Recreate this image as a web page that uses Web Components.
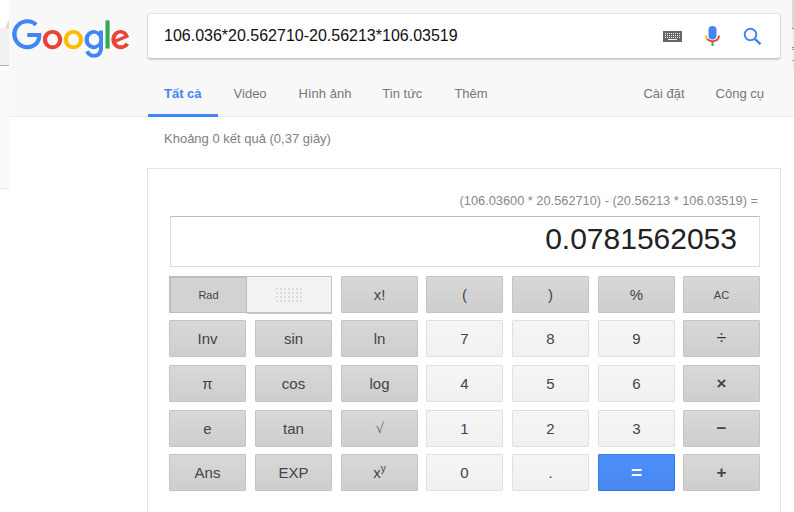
<!DOCTYPE html>
<html lang="vi">
<head>
<meta charset="utf-8">
<title>106.036*20.562710-20.56213*106.03519</title>
<style>
  html, body { margin: 0; height: 512px; overflow: hidden; background: #fff; }
  body { font-family: "Liberation Sans", Arial, sans-serif; display: flex; }
  search-page { flex: 1; }
</style>
</head>
<body>
<template id="calc-key-tpl">
  <style>
    :host {
      display: flex;
      align-items: center;
      justify-content: center;
      box-sizing: border-box;
      width: 77px;
      height: 37px;
      font-size: 15px;
      color: #444;
      border: 1px solid #c4c4c4;
      border-radius: 1px;
      background: linear-gradient(#d8d8d8, #cecece);
    }
    :host([kind="num"]) {
      border-color: #e0e0e0;
      background: linear-gradient(#f5f5f5, #f1f1f1);
    }
    :host([kind="eq"]) {
      border-color: #3079ed;
      background: linear-gradient(#4d90fe, #4787ed);
      color: #fff;
      font-weight: bold;
      font-size: 19px;
    }
    :host([small]) { font-size: 11px; }
    :host([op]) { font-size: 18px; color: #333; }
    :host([op="bold"]) { font-weight: bold; font-size: 17px; color: #444; }
  </style>
  <span><slot></slot></span>
</template>

<script>
class SearchPage extends HTMLElement {
	get template() {
		let t = document.createElement("template");
		t.innerHTML = `
    <style>
      :host {
        display: grid;
        grid-template-columns: 9px 1fr;
        height: 512px;
      }
      .side {
        display: flex;
        flex-direction: column;
      }
      .side-top {
        box-sizing: border-box;
        height: 28px;
        background: #fff;
        display: flex;
        justify-content: flex-end;
        align-items: flex-end;
      }
      .side-top i {
        width: 0;
        height: 0;
        border-left: 4px solid transparent;
        border-bottom: 8px solid #d8d8d8;
      }
      .side-bar { height: 37px; background: #f0f0f0; border-bottom: 1px solid #b4b4b4; }
      .side-mid { height: 122px; background: #fafafa; border-bottom: 1px solid #e6e6e6; }
      .main { min-width: 0; }
    </style>
    <div class="side">
      <div class="side-top"><i></i></div>
      <div class="side-bar"></div>
      <div class="side-mid"></div>
    </div>
    <div class="main">
      <slot></slot>
    </div>
		`;
		return t;
	}
	connectedCallback() {
		this.attachShadow({ mode: "open" });
		this.shadowRoot.appendChild(this.template.content.cloneNode(true));
	}
}
customElements.define("search-page", SearchPage);

class SearchHeader extends HTMLElement {
	get template() {
		let t = document.createElement("template");
		t.innerHTML = `
    <style>
      :host {
        display: block;
        position: relative;
        box-sizing: border-box;
        height: 117px;
        background: #f8f8f8;
        border-bottom: 1px solid #ebebeb;
        padding-top: 14px;
      }
      .top {
        display: flex;
        align-items: flex-start;
        padding-left: 3px;
      }
      .logo { width: 118px; height: 40px; margin-top: 5px; flex: none; }
      .box {
        box-sizing: border-box;
        width: 632px;
        height: 44px;
        margin-left: 18px;
        padding: 0 18px 0 16px;
        display: flex;
        align-items: center;
        background: #fff;
        border-radius: 2px;
        box-shadow: 0 2px 2px rgba(0,0,0,.16), 0 0 0 1px rgba(0,0,0,.08);
        font-size: 16px;
        color: #111;
      }
      .query { flex: 1; }
      .box svg { display: block; flex: none; }
      .kbd { margin-right: 23px; }
      .mic { margin-right: 23px; }
      .tabs {
        display: flex;
        height: 43px;
        margin-top: 15px;
        padding-left: 139px;
        padding-right: 14px;
      }
      ::slotted(search-tab[push]) { margin-left: auto; }
      /* scrollbar remains at the right edge of the capture */
      .edge {
        position: absolute;
        top: 0;
        right: 0;
        width: 2px;
        height: 70px;
        background:
          linear-gradient(#9a9a9a, #9a9a9a) 0 28px / 2px 1px no-repeat,
          linear-gradient(#8c8c8c, #8c8c8c) 0 47px / 2px 1px no-repeat,
          linear-gradient(#9a9a9a, #9a9a9a) 0 49px / 2px 1px no-repeat,
          linear-gradient(#a8a8a8, #a8a8a8) 0 60px / 2px 1px no-repeat,
          linear-gradient(#dcdcdc 28px, #f0f0f0 28px);
      }
    </style>
    <div class="top">
      <svg class="logo" viewBox="0 0 272 92" role="img" aria-label="Google">
        <path fill="#EA4335" d="M115.75 47.18c0 12.77-9.99 22.18-22.25 22.18s-22.25-9.41-22.25-22.18C71.25 34.32 81.24 25 93.5 25s22.25 9.32 22.25 22.18zm-9.74 0c0-7.98-5.79-13.44-12.51-13.44S80.99 39.2 80.99 47.18c0 7.9 5.79 13.44 12.51 13.44s12.51-5.55 12.51-13.44z"/>
        <path fill="#FBBC05" d="M163.75 47.18c0 12.77-9.99 22.18-22.25 22.18s-22.25-9.41-22.25-22.18c0-12.85 9.99-22.18 22.25-22.18s22.25 9.32 22.25 22.18zm-9.74 0c0-7.98-5.79-13.44-12.51-13.44s-12.51 5.46-12.51 13.44c0 7.9 5.79 13.44 12.51 13.44s12.51-5.55 12.51-13.44z"/>
        <path fill="#4285F4" d="M209.75 26.34v39.82c0 16.38-9.66 23.07-21.08 23.07-10.75 0-17.22-7.19-19.66-13.07l8.48-3.53c1.51 3.61 5.21 7.87 11.17 7.87 7.31 0 11.84-4.51 11.84-13v-3.19h-.34c-2.18 2.69-6.38 5.04-11.68 5.04-11.09 0-21.25-9.66-21.25-22.09 0-12.52 10.16-22.26 21.25-22.26 5.29 0 9.49 2.35 11.68 4.96h.34v-3.61h9.25zm-8.56 20.92c0-7.81-5.21-13.52-11.84-13.52-6.72 0-12.35 5.71-12.35 13.52 0 7.73 5.63 13.36 12.35 13.36 6.63 0 11.84-5.63 11.84-13.36z"/>
        <path fill="#34A853" d="M225 3v65h-9.5V3h9.5z"/>
        <path fill="#EA4335" d="M262.02 54.48l7.56 5.04c-2.44 3.61-8.32 9.83-18.48 9.83-12.6 0-22.01-9.74-22.01-22.18 0-13.19 9.49-22.18 20.92-22.18 11.51 0 17.14 9.16 18.98 14.11l1.01 2.52-29.65 12.28c2.27 4.45 5.8 6.72 10.75 6.72 4.96 0 8.4-2.44 10.92-6.14zm-23.27-7.98l19.82-8.23c-1.09-2.77-4.37-4.7-8.23-4.7-4.95 0-11.84 4.37-11.59 12.93z"/>
        <path fill="#4285F4" d="M35.29 41.41V32H67c.31 1.64.47 3.58.47 5.68 0 7.06-1.93 15.79-8.15 22.01-6.05 6.3-13.78 9.66-24.02 9.66C16.32 69.35.36 53.89.36 34.91.36 15.93 16.32.47 35.3.47c10.5 0 17.98 4.12 23.6 9.49l-6.64 6.64c-4.03-3.78-9.49-6.72-16.97-6.72-13.86 0-24.7 11.17-24.7 25.03 0 13.86 10.84 25.03 24.7 25.03 8.99 0 14.11-3.61 17.39-6.89 2.66-2.66 4.41-6.46 5.1-11.65l-22.49.01z"/>
      </svg>
      <div class="box">
        <span class="query"><slot name="query"></slot></span>
        <svg class="kbd" width="19" height="11" viewBox="0 0 19 11">
          <rect width="19" height="11" fill="#666"/>
          <path fill="none" stroke="#eee" stroke-width="1" stroke-dasharray="1 1" d="M2 2.5h15M2 4.5h15M2 6.5h15"/>
          <path stroke="#eee" d="M5 8.5h9"/>
        </svg>
        <svg class="mic" width="15" height="20" viewBox="0 0 15 20">
          <rect x="3.5" y="0" width="8" height="13.5" rx="4" fill="#4285f4"/>
          <path fill="none" stroke="#fbbc05" stroke-width="2" d="M1 9.5c0 1.5.4 2.7 1.2 3.6"/>
          <path fill="none" stroke="#ea4335" stroke-width="2" d="M2.2 13.1c1.2 1.4 3.1 2.1 5.3 2.1 3.9 0 6.5-2.3 6.5-5.7"/>
          <rect x="6.5" y="16" width="2" height="4" fill="#34a853"/>
        </svg>
        <svg width="19" height="18" viewBox="0 0 19 18">
          <circle cx="7.5" cy="7.5" r="5.8" fill="none" stroke="#4285f4" stroke-width="2"/>
          <path d="M11.8 11.8l5.7 5.4" fill="none" stroke="#4285f4" stroke-width="2.4"/>
        </svg>
      </div>
    </div>
    <div class="tabs"><slot name="tab"></slot></div>
    <div class="edge"></div>
		`;
		return t;
	}
	connectedCallback() {
		this.attachShadow({ mode: "open" });
		this.shadowRoot.appendChild(this.template.content.cloneNode(true));
	}
}
customElements.define("search-header", SearchHeader);

class SearchTab extends HTMLElement {
	get template() {
		let t = document.createElement("template");
		t.innerHTML = `
    <style>
      :host {
        display: flex;
        align-items: center;
        box-sizing: border-box;
        height: 43px;
        padding: 0 16px 5px;
        font-size: 13px;
        color: #777;
        white-space: nowrap;
      }
      :host([active]) {
        color: #4285f4;
        font-weight: bold;
        border-bottom: 3px solid #4285f4;
        padding-bottom: 2px;
      }
    </style>
    <slot></slot>
		`;
		return t;
	}
	connectedCallback() {
		this.attachShadow({ mode: "open" });
		this.shadowRoot.appendChild(this.template.content.cloneNode(true));
	}
}
customElements.define("search-tab", SearchTab);

class ResultStats extends HTMLElement {
	connectedCallback() {
		this.attachShadow({ mode: "open" });
		this.shadowRoot.innerHTML = `
    <style>
      :host {
        display: block;
        padding: 14px 0 0 155px;
        height: 37px;
        font-size: 13px;
        line-height: 15px;
        color: #808080;
      }
    </style>
    <slot></slot>
		`;
	}
}
customElements.define("result-stats", ResultStats);

class CalcCard extends HTMLElement {
	get template() {
		let t = document.createElement("template");
		t.innerHTML = `
    <style>
      :host {
        display: block;
        box-sizing: border-box;
        width: 634px;
        height: 360px;
        margin-left: 138px;
        padding: 0 20px 0 21px;
        background: #fff;
        border: 1px solid #e4e4e4;
        border-bottom: 0;
      }
      .expr {
        padding: 24px 2px 0 0;
        height: 23px;
        line-height: 15px;
        font-size: 12.8px;
        color: #888;
        text-align: right;
      }
      .display {
        box-sizing: border-box;
        height: 51px;
        margin: 0 0 9px 1px;
        padding-right: 22px;
        border: 1px solid #ddd;
        border-top-color: #bbb;
        font-size: 30px;
        line-height: 43px;
        color: #222;
        text-align: right;
      }
      .keys {
        display: grid;
        grid-template-columns: 86px 86px 85px 86px 86px 85px 77px;
        grid-template-rows: 44px 45px 45px 44px 37px;
        justify-items: start;
        align-items: start;
      }
    </style>
    <div class="expr"><slot name="expr"></slot></div>
    <div class="display"><slot name="result"></slot></div>
    <div class="keys"><slot></slot></div>
		`;
		return t;
	}
	connectedCallback() {
		this.attachShadow({ mode: "open" });
		this.shadowRoot.appendChild(this.template.content.cloneNode(true));
	}
}
customElements.define("calc-card", CalcCard);

class CalcKey extends HTMLElement {
	connectedCallback() {
		let clone = document.getElementById("calc-key-tpl").content.cloneNode(true);
		this.attachShadow({ mode: "open" });
		this.shadowRoot.appendChild(clone);
	}
}
customElements.define("calc-key", CalcKey);

class CalcToggle extends HTMLElement {
	get template() {
		let t = document.createElement("template");
		t.innerHTML = `
    <style>
      :host {
        display: grid;
        grid-column: span 2;
        grid-template-columns: 78px 85px;
        width: 163px;
        height: 37px;
        color: #444;
        font-size: 11px;
      }
      .rad {
        display: flex;
        align-items: center;
        justify-content: center;
        box-sizing: border-box;
        height: 37px;
        background: #d2d2d2;
        border: 2px solid #bdbdbd;
        border-right: 1px solid #bdbdbd;
        border-bottom-width: 1px;
      }
      .deg {
        display: flex;
        align-items: center;
        justify-content: center;
        box-sizing: border-box;
        height: 38px;
        background: #f3f3f3;
        border: 1px solid #c4c4c4;
        border-left: 0;
        border-bottom-width: 2px;
      }
      svg { display: block; }
    </style>
    <div class="rad"><slot></slot></div>
    <div class="deg">
      <svg width="26" height="14" viewBox="0 0 26 14">
        <defs>
          <pattern id="dots" width="4" height="4" patternUnits="userSpaceOnUse">
            <rect width="2" height="2" fill="#dcdcdc"/>
          </pattern>
        </defs>
        <rect width="26" height="14" fill="url(#dots)"/>
      </svg>
    </div>
		`;
		return t;
	}
	connectedCallback() {
		this.attachShadow({ mode: "open" });
		this.shadowRoot.appendChild(this.template.content.cloneNode(true));
	}
}
customElements.define("calc-toggle", CalcToggle);
</script>

<search-page>
  <search-header>
    <span slot="query">106.036*20.562710-20.56213*106.03519</span>
    <search-tab slot="tab" active>Tất cả</search-tab>
    <search-tab slot="tab">Video</search-tab>
    <search-tab slot="tab" style="margin-right:-1px">Hình ảnh</search-tab>
    <search-tab slot="tab">Tin tức</search-tab>
    <search-tab slot="tab">Thêm</search-tab>
    <search-tab slot="tab" push style="margin-right:-1px">Cài đặt</search-tab>
    <search-tab slot="tab">Công cụ</search-tab>
  </search-header>
  <result-stats>Khoảng 0 kết quả (0,37 giây)</result-stats>
  <calc-card>
    <span slot="expr">(106.03600 * 20.562710) - (20.56213 * 106.03519) =</span>
    <span slot="result">0.0781562053</span>

    <calc-toggle>Rad</calc-toggle>
    <calc-key>x!</calc-key>
    <calc-key>(</calc-key>
    <calc-key>)</calc-key>
    <calc-key>%</calc-key>
    <calc-key small>AC</calc-key>

    <calc-key>Inv</calc-key>
    <calc-key>sin</calc-key>
    <calc-key>ln</calc-key>
    <calc-key kind="num">7</calc-key>
    <calc-key kind="num">8</calc-key>
    <calc-key kind="num">9</calc-key>
    <calc-key op>÷</calc-key>

    <calc-key>π</calc-key>
    <calc-key>cos</calc-key>
    <calc-key>log</calc-key>
    <calc-key kind="num">4</calc-key>
    <calc-key kind="num">5</calc-key>
    <calc-key kind="num">6</calc-key>
    <calc-key op="bold">×</calc-key>

    <calc-key>e</calc-key>
    <calc-key>tan</calc-key>
    <calc-key style="font-family:'Liberation Serif',serif;color:#666">√</calc-key>
    <calc-key kind="num">1</calc-key>
    <calc-key kind="num">2</calc-key>
    <calc-key kind="num">3</calc-key>
    <calc-key op="bold">−</calc-key>

    <calc-key>Ans</calc-key>
    <calc-key>EXP</calc-key>
    <calc-key>x<sup style="font-size:10px;line-height:0">y</sup></calc-key>
    <calc-key kind="num">0</calc-key>
    <calc-key kind="num">.</calc-key>
    <calc-key kind="eq">=</calc-key>
    <calc-key op="bold">+</calc-key>
  </calc-card>
</search-page>
</body>
</html>
